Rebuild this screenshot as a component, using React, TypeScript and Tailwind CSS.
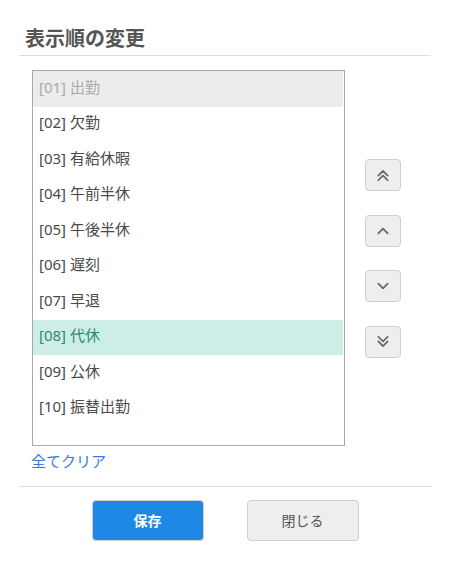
const items = [
  "[01] 出勤",
  "[02] 欠勤",
  "[03] 有給休暇",
  "[04] 午前半休",
  "[05] 午後半休",
  "[06] 遅刻",
  "[07] 早退",
  "[08] 代休",
  "[09] 公休",
  "[10] 振替出勤",
];

function Chevron({ dir, double }: { dir: "up" | "down"; double?: boolean }) {
  const lines = double
    ? dir === "up"
      ? ["2,6.5 6,2.5 10,6.5", "2,10.5 6,6.5 10,10.5"]
      : ["2,1.5 6,5.5 10,1.5", "2,5.5 6,9.5 10,5.5"]
    : dir === "up"
      ? ["2,8 6,4 10,8"]
      : ["2,4 6,8 10,4"];
  return (
    <svg width="14" height="14" viewBox="0 0 12 12" fill="none">
      {lines.map((p) => (
        <polyline key={p} points={p} stroke="#666" strokeWidth="1.5" strokeLinecap="round" strokeLinejoin="round" />
      ))}
    </svg>
  );
}

function MoveButton({ children }: { children: React.ReactNode }) {
  return (
    <button className="flex h-[32px] w-[36px] items-center justify-center rounded-[4px] border border-[#cfcfcf] bg-[#eeeeee]">
      {children}
    </button>
  );
}

export default function App() {
  return (
    <div
      className="relative h-[579px] w-[450px] bg-white text-[#333]"
      style={{ fontFamily: '"Noto Sans", "Noto Sans CJK JP", sans-serif' }}
    >
      <div className="mx-[19px] border-b border-[#dddddd] pb-[5px] pl-[6px] pt-[27px]">
        <h2 className="text-[20px] font-bold leading-[23px] text-[#555]">表示順の変更</h2>
      </div>

      <div className="mx-[19px] pl-[13px] pt-[14px]">
        <div className="flex">
          <div className="h-[376px] w-[313px] border border-[#a8a8a8] bg-white">
            {items.map((label, i) => {
              let cls = "text-[#4a4a4a]";
              if (i === 0) cls = "bg-[#ececec] text-[#aaa]";
              if (i === 7) cls = "bg-[#cdeee6] text-[#2e8a6c]";
              return (
                <div
                  key={label}
                  className={`flex h-[35.5px] w-[310px] items-center pb-[4px] pl-[6px] text-[15px] ${cls}`}
                >
                  {label}
                </div>
              );
            })}
          </div>

          <div className="ml-[20px] flex flex-col gap-[23.5px] pt-[89px]">
            <MoveButton>
              <Chevron dir="up" double />
            </MoveButton>
            <MoveButton>
              <Chevron dir="up" />
            </MoveButton>
            <MoveButton>
              <Chevron dir="down" />
            </MoveButton>
            <MoveButton>
              <Chevron dir="down" double />
            </MoveButton>
          </div>
        </div>

        <a href="#" className="-ml-[1px] mt-[5px] block text-[15px] leading-[20px] text-[#3a7bd5]">
          全てクリア
        </a>
      </div>

      <div className="mx-[19px] mt-[15px] flex justify-center gap-[43px] border-t border-[#dddddd] pt-[13px]">
        <button className="h-[41px] w-[112px] rounded-[4px] border border-[#d0d0d0] bg-[#1e88e5] text-[14px] font-bold text-white">
          保存
        </button>
        <button className="h-[41px] w-[112px] rounded-[4px] border border-[#cfcfcf] bg-[#eeeeee] text-[14px] text-[#555]">
          閉じる
        </button>
      </div>
    </div>
  );
}
